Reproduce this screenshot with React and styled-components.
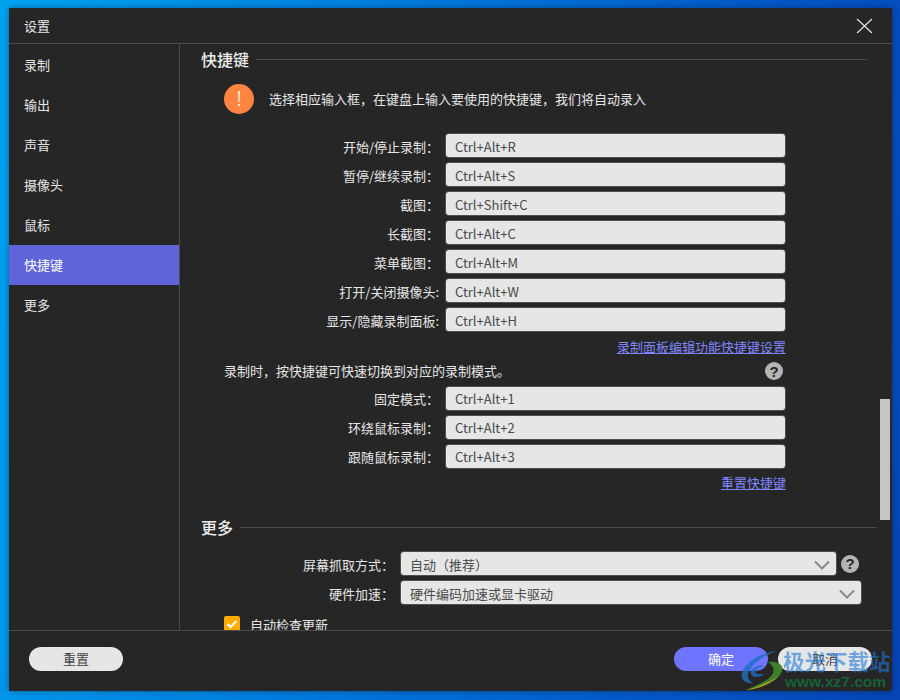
import React from "react";
import styled, { createGlobalStyle } from "styled-components";

const GlobalStyle = createGlobalStyle`
  html, body {
    margin: 0;
    padding: 0;
  }
  body {
    font-family: "Noto Sans CJK SC", "Liberation Sans", sans-serif;
    overflow: hidden;
  }
`;

const Desktop = styled.div`
  width: 900px;
  height: 700px;
  box-sizing: border-box;
  padding: 8px 8px 9px 9px;
  background: linear-gradient(100deg, #00a2f0 0%, #0080e0 35%, #0458c8 75%, #0644b6 100%);
`;

const Dialog = styled.div`
  position: relative;
  width: 883px;
  height: 683px;
  display: flex;
  flex-direction: column;
  background: #262626;
  color: #e6e6e6;
  box-shadow: 0 0 6px rgba(0, 0, 0, 0.35);
  overflow: hidden;
`;

const Header = styled.div`
  height: 35px;
  flex: none;
  display: flex;
  align-items: center;
  justify-content: space-between;
  padding: 0 19px 0 15px;
  box-sizing: border-box;
  font-size: 13px;
`;

const HeaderLine = styled.div`
  height: 1px;
  flex: none;
  background: #4a4a4a;
`;

const CloseButton = styled.button`
  width: 17px;
  height: 17px;
  margin-top: 2px;
  padding: 0;
  background: none;
  border: none;
  color: #e0e0e0;
  display: flex;
`;

const Body = styled.div`
  flex: 1;
  min-height: 0;
  display: flex;
`;

const Sidebar = styled.div`
  width: 170px;
  flex: none;
  padding-top: 1px;
  box-sizing: border-box;
`;

const NavItem = styled.div`
  height: 40px;
  box-sizing: border-box;
  display: flex;
  align-items: center;
  padding: 0 0 1px 15px;
  font-size: 13px;
  background: ${(p) => (p.$active ? "#5f64d8" : "transparent")};
  color: ${(p) => (p.$active ? "#ffffff" : "#e6e6e6")};
`;

const Main = styled.div`
  position: relative;
  flex: 1;
  min-width: 0;
  overflow: hidden;
  border-left: 1px solid #4a4a4a;
`;

const SectionTitle = styled.div`
  display: flex;
  align-items: center;
  gap: 7px;
  height: 22px;
  margin: ${(p) => p.$margin};
  padding-left: 21px;
  padding-right: ${(p) => p.$right}px;
  font-size: 16px;
  font-weight: 500;
  color: #ececec;
  &::after {
    content: "";
    flex: 1;
    height: 1px;
    background: #4a4a4a;
  }
`;

const Notice = styled.div`
  display: flex;
  align-items: center;
  gap: 15px;
  height: 30px;
  margin: 14px 0 20px 44px;
  font-size: 13px;
`;

const NoticeText = styled.span`
  margin-bottom: 2px;
`;

const NoticeIcon = styled.div`
  width: 30px;
  height: 30px;
  flex: none;
  border-radius: 50%;
  background: #ff8540;
  display: flex;
  align-items: center;
  justify-content: center;
`;

const Rows = styled.div`
  display: flex;
  flex-direction: column;
  gap: 6px;
  --text-drop: ${(p) => (p.$snug ? "0px" : "2px")};
`;

const Row = styled.div`
  display: flex;
  align-items: center;
  gap: 7px;
  height: 23px;
`;

const Label = styled.div`
  width: ${(p) => p.$width}px;
  flex: none;
  padding-top: var(--text-drop);
  box-sizing: border-box;
  text-align: right;
  font-size: 13px;
  white-space: nowrap;
`;

const Field = styled.div`
  width: ${(p) => p.$width}px;
  height: 23px;
  flex: none;
  box-sizing: border-box;
  display: flex;
  align-items: center;
  justify-content: space-between;
  padding: var(--text-drop) 4px 0 9px;
  background: #e6e6e6;
  box-shadow: 0 0 0 1px #4f4f4f;
  border-radius: 3px;
  font-size: 13px;
  color: #4a4a4a;
`;

const LinkRow = styled.div`
  width: 606px;
  height: ${(p) => p.$height}px;
  display: flex;
  align-items: center;
  justify-content: flex-end;
  font-size: 13px;
`;

const TextLink = styled.a`
  color: #8085ff;
  text-decoration: underline;
`;

const HintRow = styled.div`
  width: 603px;
  height: 20px;
  margin: 0 0 6px 0;
  padding-left: 44px;
  box-sizing: border-box;
  display: flex;
  align-items: center;
  justify-content: space-between;
  font-size: 13px;
`;

const HintText = styled.span`
  margin-bottom: 2px;
`;

const HelpDot = styled.div`
  width: 18px;
  height: 18px;
  flex: none;
  margin-left: ${(p) => p.$shift || 0}px;
  border-radius: 50%;
  background: #b4b4b4;
  color: #262626;
  display: flex;
  align-items: center;
  justify-content: center;
  font-family: "Liberation Sans", sans-serif;
  font-size: 15px;
  font-weight: 700;
`;

const CheckRow = styled.div`
  display: flex;
  align-items: center;
  gap: 10px;
  height: 18px;
  margin: 11px 0 0 44px;
  font-size: 13px;
`;

const CheckBox = styled.div`
  width: 16px;
  height: 16px;
  flex: none;
  border-radius: 2px;
  background: #ffac00;
  display: flex;
  align-items: center;
  justify-content: center;
`;

const Thumb = styled.div`
  position: absolute;
  top: 355px;
  right: 2px;
  width: 10px;
  height: 121px;
  background: #c6c6c6;
`;

const Footer = styled.div`
  height: 61px;
  flex: none;
  display: flex;
  align-items: flex-start;
  justify-content: space-between;
  box-sizing: border-box;
  padding: 16px 20px 0 20px;
  border-top: 1px solid #4a4a4a;
`;

const FooterGroup = styled.div`
  display: flex;
  gap: 10px;
`;

const PillButton = styled.button`
  width: 94px;
  height: 24px;
  padding: 0 0 2px 0;
  border: none;
  border-radius: 12px;
  background: ${(p) => (p.$primary ? "#6f74ff" : "#e6e6e6")};
  color: ${(p) => (p.$primary ? "#ffffff" : "#444444")};
  font-family: inherit;
  font-size: 13px;
`;

const Watermark = styled.div`
  position: absolute;
  right: 0;
  bottom: 0;
  width: 152px;
  height: 42px;
  pointer-events: none;
`;

const WatermarkLogo = styled.svg`
  position: absolute;
  left: 0;
  top: 0;
  width: 46px;
  height: 42px;
`;

const WatermarkName = styled.div`
  position: absolute;
  left: 43px;
  top: -2px;
  font-size: 21.5px;
  font-weight: 700;
  line-height: 28px;
  color: rgba(30, 120, 215, 0.6);
  white-space: nowrap;
`;

const WatermarkUrl = styled.div`
  position: absolute;
  left: 45px;
  top: 24px;
  font-family: "Liberation Sans", sans-serif;
  font-size: 15.5px;
  font-weight: 700;
  line-height: 18px;
  color: rgba(18, 110, 58, 0.85);
  white-space: nowrap;
`;

const navItems = ["录制", "输出", "声音", "摄像头", "鼠标", "快捷键", "更多"];

const shortcuts = [
  ["开始/停止录制：", "Ctrl+Alt+R"],
  ["暂停/继续录制：", "Ctrl+Alt+S"],
  ["截图：", "Ctrl+Shift+C"],
  ["长截图：", "Ctrl+Alt+C"],
  ["菜单截图：", "Ctrl+Alt+M"],
  ["打开/关闭摄像头:", "Ctrl+Alt+W"],
  ["显示/隐藏录制面板:", "Ctrl+Alt+H"],
];

const modes = [
  ["固定模式：", "Ctrl+Alt+1"],
  ["环绕鼠标录制：", "Ctrl+Alt+2"],
  ["跟随鼠标录制：", "Ctrl+Alt+3"],
];

function Chevron() {
  return (
    <svg width="20" height="12" viewBox="0 0 20 12" fill="none">
      <path d="M3 2.5 L10 9.5 L17 2.5" stroke="#8a8a8a" strokeWidth="2" />
    </svg>
  );
}

export default function App() {
  return (
    <>
      <GlobalStyle />
      <Desktop>
        <Dialog>
          <Header>
            <span>设置</span>
            <CloseButton>
              <svg width="17" height="17" viewBox="0 0 17 17" fill="none">
                <path d="M1 1 L16 15 M16 1 L1 15" stroke="currentColor" strokeWidth="1.2" />
              </svg>
            </CloseButton>
          </Header>
          <HeaderLine />
          <Body>
            <Sidebar>
              {navItems.map((item) => (
                <NavItem key={item} $active={item === "快捷键"}>
                  {item}
                </NavItem>
              ))}
            </Sidebar>
            <Main>
              <SectionTitle $margin="4px 0 0 0" $right={25}>快捷键</SectionTitle>
              <Notice>
                <NoticeIcon>
                  <svg width="4" height="16" viewBox="0 0 4 16">
                    <path d="M1.2 0 H2.8 L2.5 11 H1.5 Z M1.2 13 H2.8 V15 H1.2 Z" fill="#ffffff" />
                  </svg>
                </NoticeIcon>
                <NoticeText>选择相应输入框，在键盘上输入要使用的快捷键，我们将自动录入</NoticeText>
              </Notice>
              <Rows>
                {shortcuts.map(([label, value]) => (
                  <Row key={label}>
                    <Label $width={259}>{label}</Label>
                    <Field $width={339}>{value}</Field>
                  </Row>
                ))}
              </Rows>
              <LinkRow $height={30}>
                <TextLink>录制面板编辑功能快捷键设置</TextLink>
              </LinkRow>
              <HintRow>
                <HintText>录制时，按快捷键可快速切换到对应的录制模式。</HintText>
                <HelpDot>?</HelpDot>
              </HintRow>
              <Rows $snug>
                {modes.map(([label, value]) => (
                  <Row key={label}>
                    <Label $width={259}>{label}</Label>
                    <Field $width={339}>{value}</Field>
                  </Row>
                ))}
              </Rows>
              <LinkRow $height={28}>
                <TextLink>重置快捷键</TextLink>
              </LinkRow>
              <SectionTitle $margin="20px 0 14px 0" $right={15}>更多</SectionTitle>
              <Rows>
                <Row>
                  <Label $width={214}>屏幕抓取方式：</Label>
                  <Field $width={435}>
                    自动（推荐）
                    <Chevron />
                  </Field>
                  <HelpDot $shift={-2}>?</HelpDot>
                </Row>
                <Row>
                  <Label $width={214}>硬件加速：</Label>
                  <Field $width={460}>
                    硬件编码加速或显卡驱动
                    <Chevron />
                  </Field>
                </Row>
              </Rows>
              <CheckRow>
                <CheckBox>
                  <svg width="12" height="10" viewBox="0 0 12 10" fill="none">
                    <path d="M1.5 5 L4.5 8 L10.5 2" stroke="#ffffff" strokeWidth="2" />
                  </svg>
                </CheckBox>
                自动检查更新
              </CheckRow>
              <Thumb />
            </Main>
          </Body>
          <Footer>
            <PillButton>重置</PillButton>
            <FooterGroup>
              <PillButton $primary>确定</PillButton>
              <PillButton>取消</PillButton>
            </FooterGroup>
          </Footer>
          <Watermark>
            <WatermarkLogo viewBox="0 0 46 42">
              <path d="M36 2 C22 4 6 12 2 24 C0 31 6 35 13 34 C7 31 6 25 11 19 C16 12 24 7 36 2 Z" fill="#1f6fc0" opacity="0.8" />
              <path d="M24 17 C16 15 10 20 11 25 C12 29 20 29 24 25 L18 25 C15 25 14 22 17 20 C19 19 22 18 24 17 Z" fill="#1f6fc0" opacity="0.8" />
              <path d="M28 13 C37 12 44 15 42 22 C39 31 26 38 6 41 C18 36 30 31 33 24 C35 19 32 16 28 13 Z" fill="#3f8a2a" opacity="0.9" />
              <path d="M6 41 C18 38 30 33 38 27 C32 34 20 40 6 41 Z" fill="#b3a31c" />
            </WatermarkLogo>
            <WatermarkName>极光下载站</WatermarkName>
            <WatermarkUrl>www.xz7.com</WatermarkUrl>
          </Watermark>
        </Dialog>
      </Desktop>
    </>
  );
}
